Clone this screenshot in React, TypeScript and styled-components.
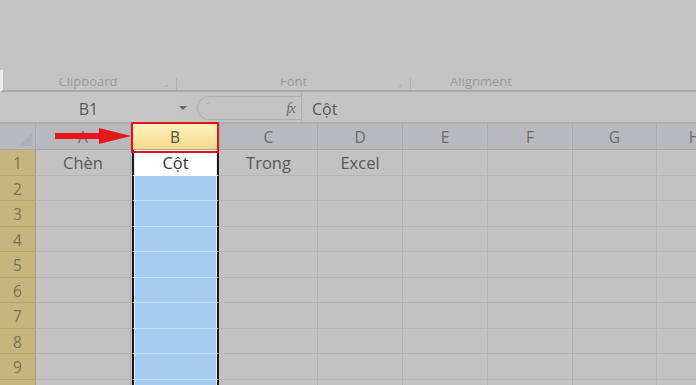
import React from "react";
import styled, { createGlobalStyle } from "styled-components";

const Global = createGlobalStyle`
  html, body { margin: 0; padding: 0; background: #c3c3c3; }
  body { width: 696px; height: 385px; overflow: hidden; font-family: "Open Sans", "Liberation Sans", sans-serif; }
`;

const Page = styled.div`
  width: 696px;
  height: 385px;
  overflow: hidden;
  display: flex;
  flex-direction: column;
  background: #c2c2c2;
`;

const TopShade = styled.div`
  height: 70px;
  flex: none;
  background: #c5c5c5;
`;

const RibbonBand = styled.div`
  height: 20px;
  flex: none;
  display: flex;
  flex-direction: column;
  justify-content: flex-end;
  background: #c4c4c4;
  border-left: 3px solid #ececec;
  border-bottom: 2px solid #a9a9a9;
`;

const LabelStrip = styled.div`
  height: 12px;
  overflow: hidden;
  display: grid;
  grid-template-columns: 177px 234px 1fr;
  margin-left: -3px;
`;

const Group = styled.div<{ $sep?: boolean }>`
  position: relative;
  border-right: ${(p) => (p.$sep ? "1px solid #b0b0b0" : "none")};
  text-align: center;
  font-size: 13px;
  line-height: 13px;
  color: #9a9a9a;
`;

const GroupLabel = styled.div<{ $shift?: number }>`
  margin-top: -3px;
  margin-right: ${(p) => p.$shift ?? 0}px;
`;

const Launcher = styled.span`
  position: absolute;
  right: 8px;
  top: -2px;
  font-size: 9px;
  color: #a4a4a4;
`;

const FormulaBar = styled.div`
  height: 30px;
  flex: none;
  display: flex;
  align-items: center;
  background: #c4c4c4;
  border-bottom: 2px solid #adadad;
`;

const NameBox = styled.div`
  width: 177px;
  height: 100%;
  display: flex;
  align-items: center;
  justify-content: center;
  padding-top: 3px;
  box-sizing: border-box;
  font-size: 16px;
  color: #585858;
  background: #c6c6c6;
`;

const DropArrow = styled.div`
  width: 0;
  height: 0;
  border-left: 4px solid transparent;
  border-right: 4px solid transparent;
  border-top: 4px solid #666;
  margin: 2px 10px 0 2px;
`;

const Pill = styled.div`
  width: 104px;
  height: 24px;
  box-sizing: border-box;
  border: 1px solid #adadad;
  border-right: none;
  border-radius: 12px 0 0 12px;
  display: flex;
  align-items: center;
  justify-content: space-between;
  padding: 0 6px 0 8px;
  margin-top: 2px;
  background: #c3c3c3;
`;

const Dash = styled.span`
  width: 3px;
  height: 1px;
  background: #b0b0b0;
  margin-bottom: 10px;
`;

const Fx = styled.span`
  font-family: "Liberation Serif", serif;
  font-style: italic;
  font-size: 15px;
  color: #6a6a6a;
  letter-spacing: -1px;
`;

const FormulaInput = styled.div`
  flex: 1;
  height: 100%;
  box-sizing: border-box;
  display: flex;
  align-items: center;
  padding: 3px 0 0 10px;
  border-left: 1px solid #b0b0b0;
  font-size: 16px;
  color: #585858;
`;

const COLS = "36px 95px 89px 98px 85px 85px 85px 84px 76px";

const HeaderRow = styled.div`
  height: 26px;
  flex: none;
  display: grid;
  grid-template-columns: ${COLS};
  background: #b8b9bc;
  border-bottom: 1px solid #a6a7ab;
  box-sizing: border-box;
`;

const Corner = styled.div`
  position: relative;
  border-right: 1px solid #a9aaae;
  &::after {
    content: "";
    position: absolute;
    right: 3px;
    bottom: 3px;
    width: 0;
    height: 0;
    border-left: 13px solid transparent;
    border-bottom: 13px solid #aeafb2;
  }
`;

const ColHead = styled.div<{ $active?: boolean }>`
  position: relative;
  display: flex;
  align-items: center;
  justify-content: center;
  font-size: 15.5px;
  color: ${(p) => (p.$active ? "#505040" : "#6a6a6a")};
  border-right: 1px solid #a9aaae;
  background: ${(p) =>
    p.$active ? "linear-gradient(#fdf2c0, #f6d98a)" : "transparent"};
  ${(p) =>
    p.$active
      ? `&::after {
    content: "";
    position: absolute;
    left: 0;
    right: 0;
    top: -2px;
    bottom: -4px;
    border: 2px solid #e3121b;
    border-radius: 1px;
  }`
      : ""}
`;

const Arrow = styled.svg`
  position: absolute;
  left: 19px;
  top: 4px;
`;

const Body = styled.div`
  flex: 1;
  display: flex;
  flex-direction: column;
`;

const Row = styled.div`
  height: 25.5px;
  flex: none;
  display: grid;
  grid-template-columns: ${COLS};
`;

const RowHead = styled.div`
  box-sizing: border-box;
  display: flex;
  align-items: center;
  justify-content: center;
  padding-top: 2px;
  background: #c7b57d;
  border-right: 1px solid #a99b6c;
  border-bottom: 1px solid #b6a572;
  font-size: 15.5px;
  color: #7b705a;
`;

const Cell = styled.div`
  box-sizing: border-box;
  display: flex;
  align-items: center;
  justify-content: center;
  border-right: 1px solid #b3b3b3;
  border-bottom: 1px solid #b3b3b3;
  font-size: 16.5px;
  color: #585858;
  padding-top: 1px;
`;

const SelCell = styled.div<{ $first?: boolean }>`
  box-sizing: border-box;
  display: flex;
  align-items: center;
  justify-content: center;
  margin-left: 1px;
  border-left: 2px solid #1b1b1b;
  border-right: 2px solid #1b1b1b;
  margin-right: 1px;
  background: ${(p) => (p.$first ? "#ffffff" : "#a6cdf0")};
  box-shadow: inset 1px 0 0 #e6eef8, inset -1px 0 0 #e6eef8;
  border-bottom: 1px solid ${(p) => (p.$first ? "#ffffff" : "#cfe1f4")};
  font-size: 16.5px;
  color: #333;
  padding-top: 1px;
`;

const cols = ["A", "B", "C", "D", "E", "F", "G", "H"];
const row1: Record<string, string> = { A: "Chèn", C: "Trong", D: "Excel" };

export default function App() {
  return (
    <Page>
      <Global />
      <TopShade />
      <RibbonBand>
        <LabelStrip>
          <Group $sep>
            <GroupLabel>Clipboard</GroupLabel>
            <Launcher>⌟</Launcher>
          </Group>
          <Group $sep>
            <GroupLabel>Font</GroupLabel>
            <Launcher>⌟</Launcher>
          </Group>
          <Group>
            <GroupLabel $shift={145}>Alignment</GroupLabel>
          </Group>
        </LabelStrip>
      </RibbonBand>
      <FormulaBar>
        <NameBox>B1</NameBox>
        <DropArrow />
        <Pill>
          <Dash />
          <Fx>fx</Fx>
        </Pill>
        <FormulaInput>Cột</FormulaInput>
      </FormulaBar>
      <HeaderRow>
        <Corner />
        {cols.map((c) => (
          <ColHead key={c} $active={c === "B"}>
            {c}
            {c === "A" && (
              <Arrow width="76" height="16" viewBox="0 0 76 16">
                <path d="M0 5 H44 V0 L76 8 L44 16 V11 H0 Z" fill="#e8151c" />
              </Arrow>
            )}
          </ColHead>
        ))}
      </HeaderRow>
      <Body>
        {Array.from({ length: 10 }, (_, i) => (
          <Row key={i}>
            <RowHead>{i + 1}</RowHead>
            {cols.map((c) =>
              c === "B" ? (
                <SelCell key={c} $first={i === 0}>
                  {i === 0 ? "Cột" : ""}
                </SelCell>
              ) : (
                <Cell key={c}>{i === 0 ? row1[c] ?? "" : ""}</Cell>
              )
            )}
          </Row>
        ))}
      </Body>
    </Page>
  );
}
